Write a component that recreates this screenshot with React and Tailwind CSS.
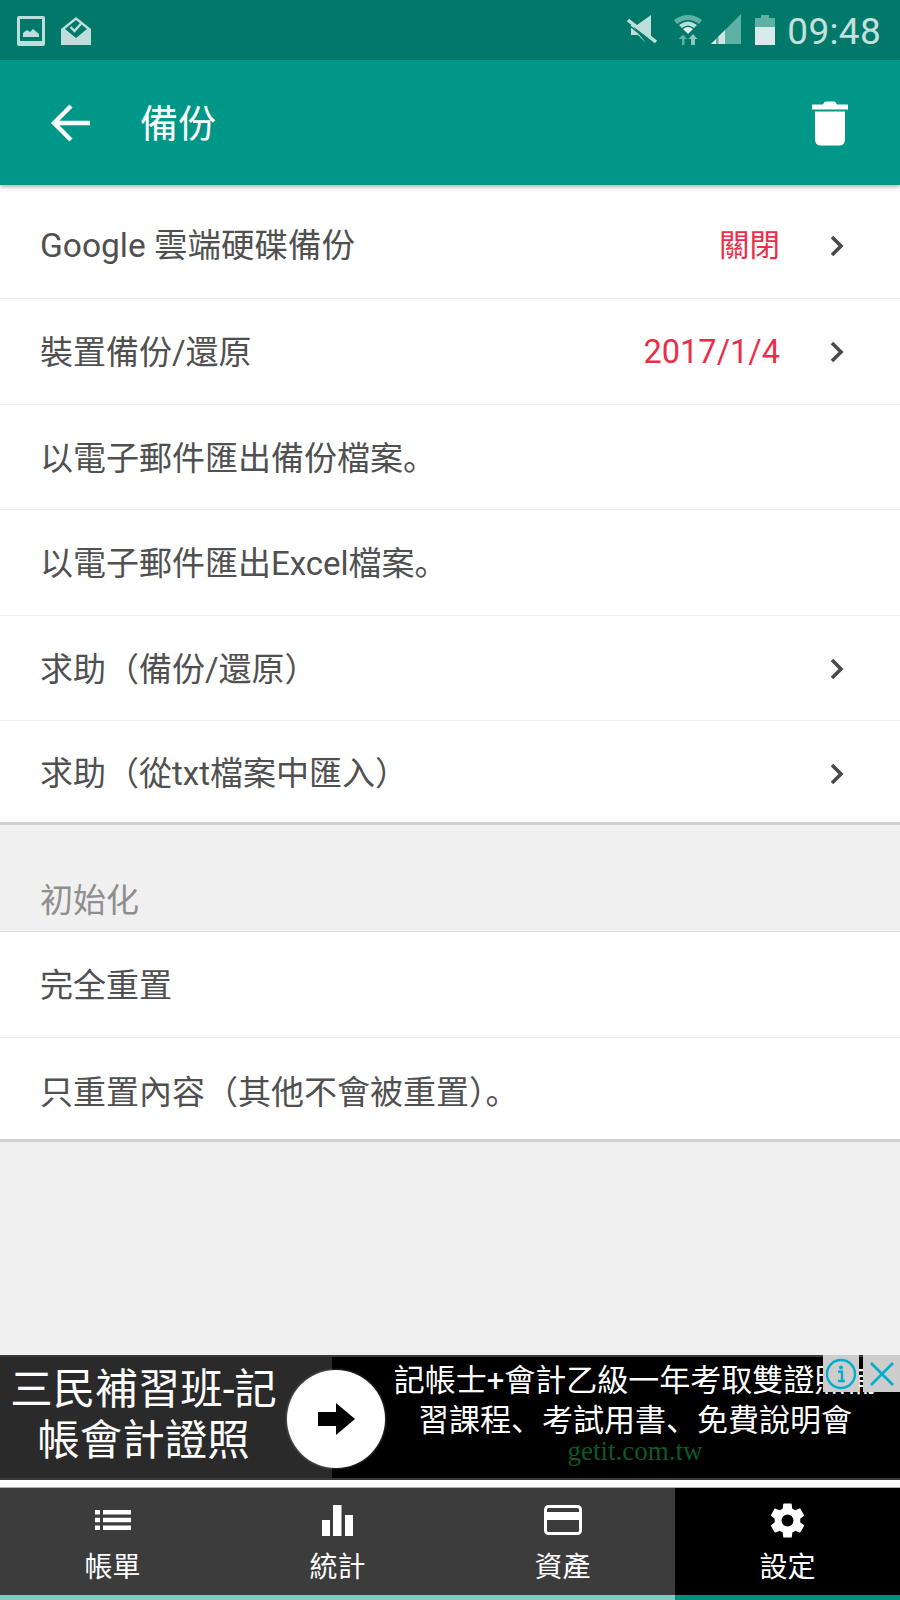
const CJK = "font-['Roboto','Noto_Sans_CJK_SC','Noto_Sans_CJK_TC',sans-serif]";

function Chevron() {
  return (
    <svg width="14" height="22" viewBox="0 0 14 22" className="shrink-0">
      <path d="M2 2 L11 11 L2 20" fill="none" stroke="#4a4a4a" strokeWidth="3.6" />
    </svg>
  );
}

function Row({ label, value, chevron, last, h = "h-[105.5px]", pt = "pt-[3px]" }) {
  return (
    <div className={`${h} ${pt} flex items-center pl-[40px] pr-[56px] ${last ? "" : "border-b border-[#eeeeee]"}`}>
      <span className="text-[33px] text-[#505050] flex-1 leading-none whitespace-nowrap">{label}</span>
      {value && <span className="text-[32.5px] text-[#ea2e49] leading-none mr-[50px]">{value}</span>}
      {chevron && <Chevron />}
    </div>
  );
}

function NavItem({ icon, label, active }) {
  return (
    <div className={`flex-1 flex flex-col items-center ${active ? "bg-black border-b-[5px] border-[#00907f]" : "bg-[#3c3c3c] border-b-[5px] border-[#80cbbf]"}`}>
      <div className="h-[48px] mt-[8px] flex items-center justify-center">{icon}</div>
      <span className="text-[28px] leading-none text-white mt-[10px]">{label}</span>
    </div>
  );
}

export default function App() {
  return (
    <div className={`w-[900px] h-[1600px] bg-[#f0f0f0] flex flex-col overflow-hidden ${CJK}`}>
      {/* status bar */}
      <div className="h-[60px] bg-[#00796b] flex items-center pl-[17px] pr-[19px] shrink-0">
        <svg width="28" height="30" viewBox="0 0 28 30" className="mt-[1px]">
          <path fillRule="evenodd" d="M2 0 H26 Q28 0 28 2 V28 Q28 30 26 30 H2 Q0 30 0 28 V2 Q0 0 2 0 Z M3 3 V25 H25 V3 Z" fill="#bfdedb" />
          <path d="M6 21 L6 17 L10 14 L13 16 L16 13 L22 18 L22 21 Z" fill="#bfdedb" />
        </svg>
        <svg width="30" height="28" viewBox="0 0 30 28" className="ml-[16px] mt-[1px]">
          <path d="M0 12 L15 0 L30 12 L30 28 L0 28 Z" fill="#bfdedb" />
          <path d="M4 12 L15 3 L26 12 L15 21 Z" fill="#00796b" />
          <path d="M9.5 10 L13.5 14 L21 5.5" fill="none" stroke="#bfdedb" strokeWidth="2.4" />
        </svg>
        <div className="flex-1" />
        <svg width="30" height="30" viewBox="0 0 30 30">
          <path d="M4 10 L10 10 L24 0 L24 24 Z" fill="#bfdedb" />
          <path d="M4 9 L4 20 L11 20 L19 28 Z" fill="#bfdedb" />
          <path d="M1 5 L29 27" stroke="#bfdedb" strokeWidth="3.4" />
          <path d="M-2 7 L24 28" stroke="#00796b" strokeWidth="1.4" />
        </svg>
        <svg width="28" height="32" viewBox="0 0 28 32" className="ml-[17px]">
          <path d="M0 6 Q14 -4 28 6 L25 10 Q14 2 3 10 Z" fill="#5fb0a5" />
          <path d="M5 11 Q14 4 23 11 L20 14 Q14 9 8 14 Z" fill="#bfdedb" />
          <path d="M9 15 Q14 11 19 15 L14 20 Z" fill="#e6f2f0" />
          <path d="M8 31 V25 H4.5 L9 20.5 L13 25 H10.5 V31 Z" fill="#5fb0a5" />
          <path d="M17 31 V25 H14.5 L19 20 L23.5 25 H21 V31 Z" fill="#8cc7bf" />
        </svg>
        <svg width="32" height="32" viewBox="0 0 32 32" className="ml-[9px]">
          <path d="M0 30 L30 0 L30 30 Z" fill="#5fb0a5" />
          <path d="M0 30 L5 25 V30 Z" fill="#e6f2f0" />
          <path d="M7.5 30 V22.5 L14 16 V30 Z" fill="#cfe6e3" />
        </svg>
        <svg width="20" height="30" viewBox="0 0 20 30" className="ml-[12px]">
          <path d="M6 0 H14 V3 H20 V30 H0 V3 H6 Z" fill="#5fb0a5" />
          <rect x="0" y="12" width="20" height="18" fill="#d8ebe8" />
        </svg>
        <span className="ml-[12px] mt-[3px] text-[37px] text-[#c3e0dc] font-['Roboto'] leading-none tracking-[0.3px]">09:48</span>
      </div>

      {/* app bar */}
      <div className="h-[125px] bg-[#009688] flex items-center pl-[50px] pr-[52px] shrink-0 relative z-10 shadow-[0_2px_4px_rgba(0,0,0,0.3)]">
        <svg width="40" height="40" viewBox="0 0 40 40">
          <path d="M40 20 H4 M21 3 L4 20 L21 37" fill="none" stroke="#ffffff" strokeWidth="4.4" />
        </svg>
        <span className="ml-[50px] mt-[3px] text-[38px] text-white leading-none flex-1">備份</span>
        <svg width="36" height="47" viewBox="0 0 36 46">
          <path d="M0 5 H11 Q12 2 14 2 H22 Q24 2 25 5 H36 V10 H0 Z" fill="#ffffff" />
          <path d="M3 12 H33 V40 Q33 46 27 46 H9 Q3 46 3 40 Z" fill="#ffffff" />
        </svg>
      </div>

      {/* first list */}
      <div className="bg-white shrink-0 border-b-[3px] border-[#d0d0d0] h-[640px]">
        <div className="h-[114px] flex items-center pl-[40px] pr-[56px] pt-[9px] border-b border-[#eeeeee]">
          <span className="text-[33.5px] text-[#505050] flex-1 leading-none whitespace-nowrap">Google 雲端硬碟備份</span>
          <span className="text-[30.5px] text-[#ea2e49] leading-none mr-[50px]">關閉</span>
          <Chevron />
        </div>
        <Row label="裝置備份/還原" value="2017/1/4" chevron pt="pt-[2px]" />
        <Row label="以電子郵件匯出備份檔案。" />
        <Row label="以電子郵件匯出Excel檔案。" />
        <Row label="求助（備份/還原）" chevron />
        <Row label="求助（從txt檔案中匯入）" chevron last h="h-[102px]" />
      </div>

      {/* section header */}
      <div className="h-[107px] shrink-0 flex items-end pl-[40px] pb-[14px] border-b border-[#d8d8d8]">
        <span className="text-[33px] text-[#8e8e8e] leading-none">初始化</span>
      </div>

      {/* second list */}
      <div className="bg-white shrink-0 border-b-[3px] border-[#d0d0d0]">
        <Row label="完全重置" />
        <Row label="只重置內容（其他不會被重置）。" last h="h-[101px]" pt="pt-[8px]" />
      </div>

      <div className="flex-1" />

      {/* ad */}
      <div className="h-[125px] shrink-0 bg-black border-y-2 border-[#3a3a3a] flex relative">
        <div className="w-[332px] bg-[#2a2a2a] flex items-center pb-[6px] shrink-0">
          <div className="w-[287px] text-center text-[42.5px] leading-[51px] text-white whitespace-nowrap">三民補習班-記<br />帳會計證照</div>
        </div>
        <div className="flex-1 flex flex-col items-center pl-[38px] pt-[4px]">
          <div className="text-[31px] leading-[40px] text-white text-center whitespace-nowrap">記帳士+會計乙級一年考取雙證照補<br />習課程、考試用書、免費說明會</div>
          <div className="text-[27px] leading-[30px] text-[#0c5a26] font-['Liberation_Serif',serif] -mt-[5px]">getit.com.tw</div>
        </div>
        <div className="absolute left-[287px] top-[13px] w-[98px] h-[98px] rounded-full bg-white flex items-center justify-center shadow-[0_0_3px_rgba(255,255,255,0.4)]">
          <svg width="37" height="32" viewBox="0 0 37 32">
            <path d="M0 9 H18 V0 L37 16 L18 32 V23 H0 Z" fill="#000000" />
          </svg>
        </div>
        <div className="absolute right-0 -top-[2px] h-[37px] flex">
          <div className="w-[36px] h-[37px] bg-[#cdcdcd] flex items-center justify-center">
            <svg width="32" height="32" viewBox="0 0 32 32">
              <circle cx="16" cy="16" r="14" fill="none" stroke="#00aecd" strokeWidth="2.4" />
              <circle cx="16" cy="9.5" r="2" fill="#00aecd" />
              <path d="M13 13.8 H17 V23 M13 23 H20" fill="none" stroke="#00aecd" strokeWidth="2.4" />
            </svg>
          </div>
          <div className="w-[4px] h-[37px]" />
          <div className="w-[37px] h-[37px] bg-[#cdcdcd] flex items-center justify-center">
            <svg width="26" height="26" viewBox="0 0 26 26">
              <path d="M2 2 L24 24 M24 2 L2 24" stroke="#00aecd" strokeWidth="2.6" />
            </svg>
          </div>
        </div>
      </div>

      <div className="h-[8px] bg-white shrink-0 border-b border-[#b0b0b0]" />

      {/* bottom nav */}
      <div className="h-[112px] shrink-0 flex">
        <NavItem label="帳單" icon={
          <svg width="36" height="20" viewBox="0 0 36 20">
            <path d="M0 0 H5 V4.5 H0 Z M8 0 H36 V4.5 H8 Z M0 7.8 H5 V12.2 H0 Z M8 7.8 H36 V12.2 H8 Z M0 15.5 H5 V20 H0 Z M8 15.5 H36 V20 H8 Z" fill="#ffffff" />
          </svg>
        } />
        <NavItem label="統計" icon={
          <svg width="31" height="31" viewBox="0 0 31 31">
            <path d="M0 15 H8 V31 H0 Z M11 0 H19.5 V31 H11 Z M23 10 H31 V31 H23 Z" fill="#ffffff" />
          </svg>
        } />
        <NavItem label="資產" icon={
          <svg width="38" height="30" viewBox="0 0 38 30">
            <rect x="1.5" y="1.5" width="35" height="27" rx="3" fill="none" stroke="#ffffff" strokeWidth="3" />
            <rect x="2" y="7" width="34" height="8" fill="#ffffff" />
          </svg>
        } />
        <NavItem active label="設定" icon={
          <svg width="41" height="41" viewBox="0 0 24 24">
            <path fill="#ffffff" d="M19.4 13c.04-.32.07-.65.07-1s-.03-.68-.07-1l2.1-1.65c.2-.15.25-.42.12-.64l-2-3.46c-.12-.22-.38-.3-.6-.22l-2.5 1c-.52-.4-1.08-.73-1.7-.98l-.37-2.65A.49.49 0 0 0 14 2h-4c-.25 0-.46.18-.5.42l-.37 2.65c-.62.25-1.18.58-1.7.98l-2.5-1c-.22-.08-.48 0-.6.22l-2 3.46c-.13.22-.07.49.12.64L4.57 11c-.04.32-.07.65-.07 1s.03.68.07 1l-2.1 1.65c-.2.15-.25.42-.12.64l2 3.46c.12.22.38.3.6.22l2.5-1c.52.4 1.08.73 1.7.98l.37 2.65c.04.24.25.42.5.42h4c.25 0 .46-.18.5-.42l.37-2.65c.62-.25 1.18-.58 1.7-.98l2.5 1c.22.08.48 0 .6-.22l2-3.46c.12-.22.07-.49-.12-.64L19.4 13zM12 15.5a3.5 3.5 0 1 1 0-7 3.5 3.5 0 0 1 0 7z" />
          </svg>
        } />
      </div>
    </div>
  );
}
